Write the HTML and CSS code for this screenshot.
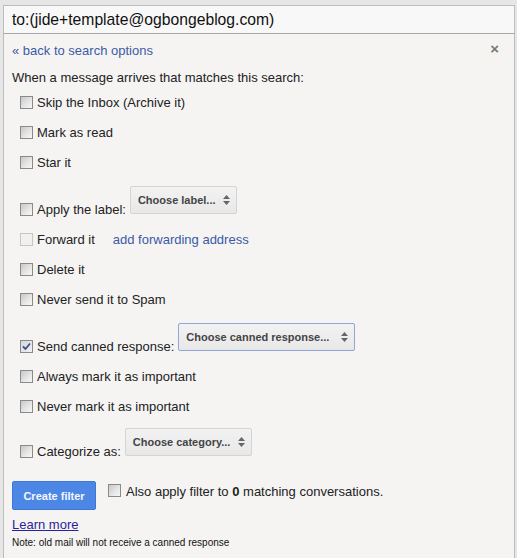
FILE: index.html
```html
<!DOCTYPE html>
<html lang="en">
<head>
    <meta charset="UTF-8">
    <title>Create filter</title>
    <link rel="stylesheet" href="styles.css">
</head>
<body>

    <div class="page">
        <!-- Search box -->
        <div class="search">to:(jide+template@ogbongeblog.com)</div>

        <!-- Filter panel -->
        <div class="panel">
            <div class="panel-top">
                <a href="#" class="back">&laquo; back to search options</a>
                <span class="close">&#215;</span>
            </div>
            <p class="intro">When a message arrives that matches this search:</p>

            <div class="row"><span class="cb"></span>Skip the Inbox (Archive it)</div>
            <div class="row"><span class="cb"></span>Mark as read</div>
            <div class="row"><span class="cb"></span>Star it</div>
            <div class="row tall">
                <span class="cb"></span>Apply the label:
                <span class="select label-select">Choose label...
                    <svg class="arrows" width="7" height="10" viewBox="0 0 7 10"><path d="M3.5 0 L7 4 L0 4 Z M0 6 L7 6 L3.5 10 Z" fill="#666"/></svg>
                </span>
            </div>
            <div class="row">
                <span class="cb disabled"></span>Forward it
                <a href="#" class="fwd">add forwarding address</a>
            </div>
            <div class="row"><span class="cb"></span>Delete it</div>
            <div class="row"><span class="cb"></span>Never send it to Spam</div>
            <div class="row tall">
                <span class="cb checked">
                    <svg width="9" height="9" viewBox="0 0 9 9"><path d="M1 4.5 L3.5 7 L8 1.5" fill="none" stroke="#3f4f86" stroke-width="1.8"/></svg>
                </span>Send canned response:
                <span class="select canned-select focus">Choose canned response...
                    <svg class="arrows" width="7" height="10" viewBox="0 0 7 10"><path d="M3.5 0 L7 4 L0 4 Z M0 6 L7 6 L3.5 10 Z" fill="#666"/></svg>
                </span>
            </div>
            <div class="row"><span class="cb"></span>Always mark it as important</div>
            <div class="row"><span class="cb"></span>Never mark it as important</div>
            <div class="row tall short">
                <span class="cb"></span>Categorize as:
                <span class="select category-select">Choose category...
                    <svg class="arrows" width="7" height="10" viewBox="0 0 7 10"><path d="M3.5 0 L7 4 L0 4 Z M0 6 L7 6 L3.5 10 Z" fill="#666"/></svg>
                </span>
            </div>

            <div class="actions">
                <button class="create-btn">Create filter</button>
                <span class="cb"></span>
                <span>Also apply filter to <b>0</b> matching conversations.</span>
            </div>
            <a href="#" class="learn">Learn more</a>
            <p class="note">Note: old mail will not receive a canned response</p>
        </div>
    </div>

</body>
</html>
```

FILE: styles.css
```css
body {
    font-family: Arial, "Liberation Sans", sans-serif;
    background-color: #e6e6e6;
    margin: 0;
    padding: 0;
    color: #222;
    font-size: 13px;
}

a {
    text-decoration: none;
}

.page {
    padding: 5px 0 0 3px;
    width: 512px;
}

.search {
    height: 27px;
    line-height: 27px;
    padding-left: 8px;
    font-size: 15.7px;
    color: #111;
    background: #f8f8f8;
    border: 1px solid #bdbdbd;
    border-bottom: 1px solid #a9a9a9;
}

.panel {
    background: #f5f4f2;
    border: 1px solid #bdbdbd;
    border-top: none;
    padding: 0 8px 20px 8px;
    min-height: 520px;
}

.panel-top {
    display: flex;
    justify-content: space-between;
    padding-top: 9px;
    height: 16px;
}

.back {
    color: #3b5aa6;
    line-height: 16px;
}

.close {
    color: #777;
    font-weight: bold;
    font-size: 15px;
    line-height: 12px;
    margin-right: 7px;
}

.intro {
    margin: 11px 0 2px 0;
    line-height: 16px;
}

.row {
    display: flex;
    align-items: flex-end;
    height: 16px;
    line-height: 16px;
    padding: 7px 0 7px 8px;
    white-space: nowrap;
}

.row.tall {
    height: 33px;
}

.row.short {
    height: 31px;
}

.cb {
    display: inline-flex;
    align-items: center;
    justify-content: center;
    width: 11px;
    height: 11px;
    border: 1px solid #8a8a8a;
    background: linear-gradient(135deg, #c8c8c8, #ececec 70%, #f6f6f6);
    margin: 0 4px 2px 0;
    flex-shrink: 0;
}

.cb.disabled {
    border-color: #c6c6c6;
    background: #f0f0f0;
}

.cb.checked {
    background: linear-gradient(135deg, #d4d4dc, #f2f2f4);
}

.fwd {
    color: #3b5aa6;
    margin-left: 18px;
}

.select {
    display: inline-flex;
    align-items: center;
    justify-content: space-between;
    height: 28px;
    margin: 0 0 4px 4px;
    padding: 0 6px 0 7px;
    box-sizing: border-box;
    background: linear-gradient(#f2f2f2, #e8e8e8);
    border: 1px solid #d4d4d4;
    border-radius: 2px;
    font-size: 11px;
    font-weight: bold;
    color: #444;
    white-space: nowrap;
}

.select.focus {
    border-color: #8fa6d6;
}

.arrows {
    margin-left: 4px;
    flex-shrink: 0;
}

.label-select {
    width: 107px;
}

.canned-select {
    width: 177px;
}

.category-select {
    width: 127px;
}

.actions {
    display: flex;
    align-items: flex-start;
    margin-top: 14px;
}

.create-btn {
    width: 84px;
    height: 29px;
    padding: 0;
    border: 1px solid #3e77d8;
    background-color: #4d87e6;
    color: #f4f7ff;
    font-family: Arial, "Liberation Sans", sans-serif;
    font-size: 11px;
    font-weight: bold;
    border-radius: 2px;
    margin-right: 12px;
}

.actions .cb {
    margin-top: 3px;
    margin-right: 5px;
}

.actions span:last-child {
    line-height: 16px;
    margin-top: 3px;
}

.learn {
    display: inline-block;
    margin-top: 7px;
    color: #2a1f9c;
    text-decoration: underline;
    line-height: 16px;
}

.note {
    margin: 4px 0 0 0;
    font-size: 10px;
    line-height: 12px;
    color: #111;
}
```
